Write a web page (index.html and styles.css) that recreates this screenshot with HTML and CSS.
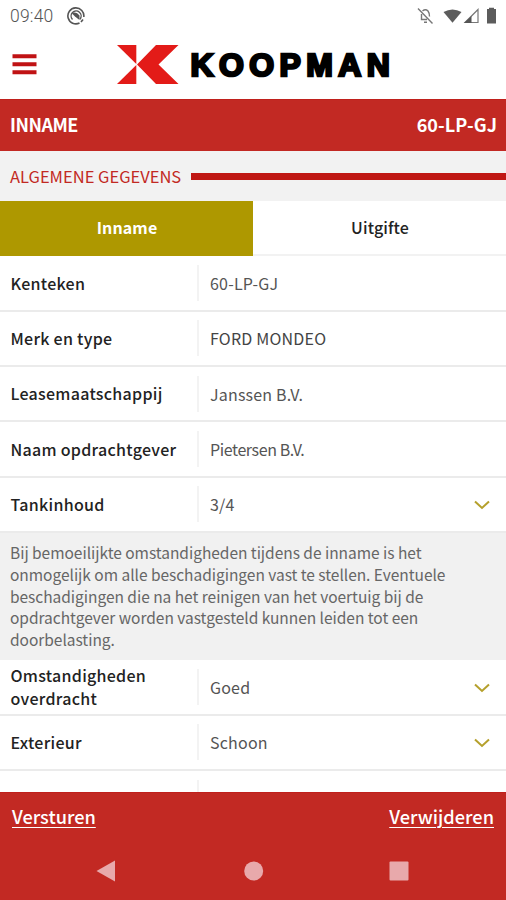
FILE: index.html
```html
<!DOCTYPE html>
<html lang="nl">
<head>
<meta charset="utf-8">
<title>Koopman Inname</title>
<link rel="stylesheet" href="styles.css">
</head>
<body>
<div class="screen">
  <div class="status">
    <span class="time">09:40</span>
    <svg class="app-icon" width="18" height="18" viewBox="0 0 18 18" fill="none" stroke="#555"><path d="M12.500 16A8 8 0 1 1 16.800 10" stroke-width="1.600"/><path d="M16 12.500L14 15" stroke-width="1.600"/><path d="M5.500 12.500A5 5 0 1 1 13 12.200" stroke-width="1.400"/><path d="M5 6.500Q9 4 12.500 8.500L12.500 13L8 9.500Z" fill="#555" stroke="none"/></svg>
    <svg class="status-icons" width="82" height="20" viewBox="0 0 82 20"><g fill="none" stroke="#777" stroke-width="1.400"><path d="M2 2.500L16.500 17.500M6.500 5Q9.500 2.500 12 5Q13.500 7 13.500 10.500M5.500 8V13.500H11M8 16.300H11"/></g><path d="M27.500 6Q36.500 1 45.500 6L36.500 16.700Z" fill="#5c5c5c"/><path d="M62 3.500V16.500H49Z" fill="none" stroke="#777" stroke-width="1.200"/><path d="M55.500 10V17H48Z" fill="#555"/><path d="M71 3H73V1.800H78V3H80V17.500H71Z" fill="#5c5c5c"/></svg>
  </div>
  <header class="header">
    <svg class="menu" width="25" height="21" viewBox="0 0 25 21" stroke="#c01214" stroke-width="4"><path d="M.5 2.300H24.500M.5 10.300H24.500M.5 18.300H24.500"/></svg>
    <svg class="logo" width="276" height="42" viewBox="0 0 276 42"><g fill="#e31b18"><path d="M1 1H20.300V20Z"/><path d="M1 40L20.300 21V40Z"/><path d="M21 20.500L40 1H62.500L42.500 20.500L62.500 40H40Z"/></g><text class="wordmark" transform="translate(74.500 31.500) scale(1.030 1)" textLength="193.500">KOOPMAN</text></svg>
  </header>
  <div class="titlebar"><span class="title">INNAME</span><span class="plate">60-LP-GJ</span></div>
  <div class="section"><span class="section-name">ALGEMENE GEGEVENS</span><span class="section-line"></span></div>
  <div class="tabs"><div class="tab active">Inname</div><div class="tab">Uitgifte</div></div>
  <main class="content">
    <div class="row"><div class="label">Kenteken</div><div class="value">60-LP-GJ</div></div>
    <div class="row"><div class="label">Merk en type</div><div class="value dark">FORD MONDEO</div></div>
    <div class="row"><div class="label">Leasemaatschappij</div><div class="value">Janssen B.V.</div></div>
    <div class="row"><div class="label">Naam opdrachtgever</div><div class="value tight">Pietersen B.V.</div></div>
    <div class="row"><div class="label">Tankinhoud</div><div class="value">3/4</div><svg class="chevron" width="16" height="10" viewBox="0 0 16 10"><path d="M1 1.500L8 8L15 1.500"/></svg></div>
    <p class="note">Bij bemoeilijkte omstandigheden tijdens de inname is het<br>onmogelijk om alle beschadigingen vast te stellen. Eventuele<br>beschadigingen die na het reinigen van het voertuig bij de<br>opdrachtgever worden vastgesteld kunnen leiden tot een<br>doorbelasting.</p>
    <div class="row"><div class="label">Omstandigheden overdracht</div><div class="value">Goed</div><svg class="chevron" width="16" height="10" viewBox="0 0 16 10"><path d="M1 1.500L8 8L15 1.500"/></svg></div>
    <div class="row"><div class="label">Exterieur</div><div class="value">Schoon</div><svg class="chevron" width="16" height="10" viewBox="0 0 16 10"><path d="M1 1.500L8 8L15 1.500"/></svg></div>
    <div class="row"><div class="label"></div><div class="value"></div></div>
  </main>
  <footer class="footer">
    <div class="actions"><a class="action">Versturen</a><a class="action">Verwijderen</a></div>
    <svg class="nav" width="506" height="24" viewBox="0 0 506 24" fill="#e8a9ab"><path d="M96.500 12L115 1.500V22.500Z"/><circle cx="253.700" cy="12" r="9.500"/><rect x="389.500" y="2.500" width="19" height="19" rx="1"/></svg>
  </footer>
</div>
</body>
</html>
```
FILE: styles.css
```css
* { box-sizing: border-box; }
body { margin: 0; background: #fff; font-family: "Noto Sans CJK JP", "Noto Sans", sans-serif; }
.screen { width: 506px; height: 900px; display: flex; flex-direction: column; overflow: hidden; }
.status { height: 32px; flex: none; display: flex; align-items: center; padding: 0 8px 0 10px; }
.time { font-family: Roboto, sans-serif; font-size: 17.500px; font-weight: 300; line-height: 20px; color: #555; letter-spacing: .2px; }
.app-icon { margin-left: 13px; }
.status-icons { margin-left: auto; }
.header { height: 67px; flex: none; display: flex; align-items: center; padding: 0 0 2px 12px; }
.logo { margin-left: 79px; }
.wordmark { font-family: "Liberation Sans", Arial, sans-serif; font-weight: 700; font-size: 31px; fill: #000; stroke: #000; stroke-width: 2.500px; }
.titlebar { height: 51.500px; flex: none; display: flex; align-items: center; justify-content: space-between; padding: 0 9px 2px 10px; background: #c22923; border-top: 1px solid #c0201c; color: #fff; font-size: 18px; line-height: 24px; font-weight: 700; }
.title { letter-spacing: -.5px; }
.plate { letter-spacing: .1px; }
.section { height: 50.500px; flex: none; display: flex; align-items: center; gap: 10px; padding-left: 10px; background: #f2f2f2; color: #c22923; font-size: 16.500px; line-height: 24px; }
.section-name { white-space: nowrap; }
.section-line { flex: 1; height: 7px; margin-top: 2px; background: #c01714; }
.tabs { height: 54.500px; flex: none; display: flex; }
.tab { flex: 1; display: flex; align-items: center; justify-content: center; padding-left: 1px; font-size: 16px; line-height: 24px; font-weight: 500; letter-spacing: .1px; color: #222; border-bottom: 2px solid #f2f2f2; }
.tab.active { background: #ae9800; color: #fff; font-weight: 700; border-color: #ae9800; }
.content { flex: 1; min-height: 0; overflow: hidden; padding-top: 1px; }
.row { height: 55.300px; display: flex; align-items: center; padding: 0 16px 0 0; border-bottom: 2px solid #ebebeb; }
.label { width: 197px; flex: none; padding: 0 10px 0 10.500px; font-size: 16px; line-height: 23px; font-weight: 500; letter-spacing: .28px; color: #222; }
.value { flex: 1; height: 36px; border-left: 2px solid #f3f3f3; padding-left: 11px; font-size: 16px; line-height: 36px; letter-spacing: .2px; color: #555; }
.dark { color: #444; }
.tight { letter-spacing: -.4px; }
.chevron { margin-top: 2px; fill: none; stroke: #b5a02c; stroke-width: 2; }
.note { height: 127.500px; margin: 0; padding: 9.500px 10px; background: #f1f1f1; font-size: 15.500px; line-height: 21.600px; letter-spacing: -.03px; color: #666; white-space: nowrap; }
.footer { height: 108px; flex: none; background: #c22923; border-top: 1px solid #c0201c; }
.actions { display: flex; justify-content: space-between; padding: 10px 12px 0; }
.action { color: #fff; font-size: 18.200px; font-weight: 500; line-height: 26px; text-decoration: underline; text-underline-offset: 3px; text-decoration-thickness: 1px; }
.nav { display: block; margin-top: 30px; }
```
